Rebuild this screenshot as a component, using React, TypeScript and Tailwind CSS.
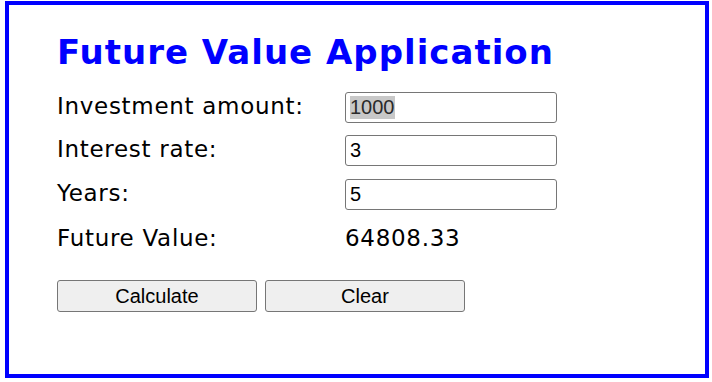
export default function App() {
  const rows = [
    { label: "Investment amount:", value: "1000", selected: true },
    { label: "Interest rate:", value: "3" },
    { label: "Years:", value: "5" },
  ];

  return (
    <div className="pl-[5px] pt-[1px] bg-white">
      <main className="w-[704px] h-[377px] border-4 border-[#0000ff] pl-[48px] pt-[25px] font-['DejaVu_Sans',Verdana,sans-serif]">
        <h1 className="text-[#0000ff] text-[34px] font-bold leading-[44px] tracking-[1px]">
          Future Value Application
        </h1>

        <div className="mt-[18px] flex flex-col gap-[12px]">
          {rows.map((row, i) => (
            <div key={row.label} className={`flex items-start h-[31px] ${i === 2 ? "mt-[1px]" : ""}`}>
              <label className="w-[288px] pt-[1px] text-[23px] leading-[27px] tracking-[0.7px] text-black">{row.label}</label>
              <div className="w-[212px] h-[31px] border border-[#767676] rounded-[3px] bg-white px-[4px] flex items-center font-['Liberation_Sans',Arial,sans-serif] text-[20px] text-black">
                {row.selected ? (
                  <span className="bg-[#c8c8c8] text-[#2a2a2a] leading-[23px]">{row.value}</span>
                ) : (
                  <span className="leading-[23px]">{row.value}</span>
                )}
              </div>
            </div>
          ))}
          <div className="flex items-start h-[31px] pt-[3px] text-[23px] leading-[27px] tracking-[0.7px] text-black">
            <span className="w-[288px]">Future Value:</span>
            <span>64808.33</span>
          </div>
        </div>

        <div className="mt-[27px] flex gap-[8px] font-['Liberation_Sans',Arial,sans-serif]">
          <button className="w-[200px] h-[32px] border border-[#767676] rounded-[3px] bg-[#efefef] text-[20px] text-black">
            Calculate
          </button>
          <button className="w-[200px] h-[32px] border border-[#767676] rounded-[3px] bg-[#efefef] text-[20px] text-black">
            Clear
          </button>
        </div>
      </main>
    </div>
  );
}
